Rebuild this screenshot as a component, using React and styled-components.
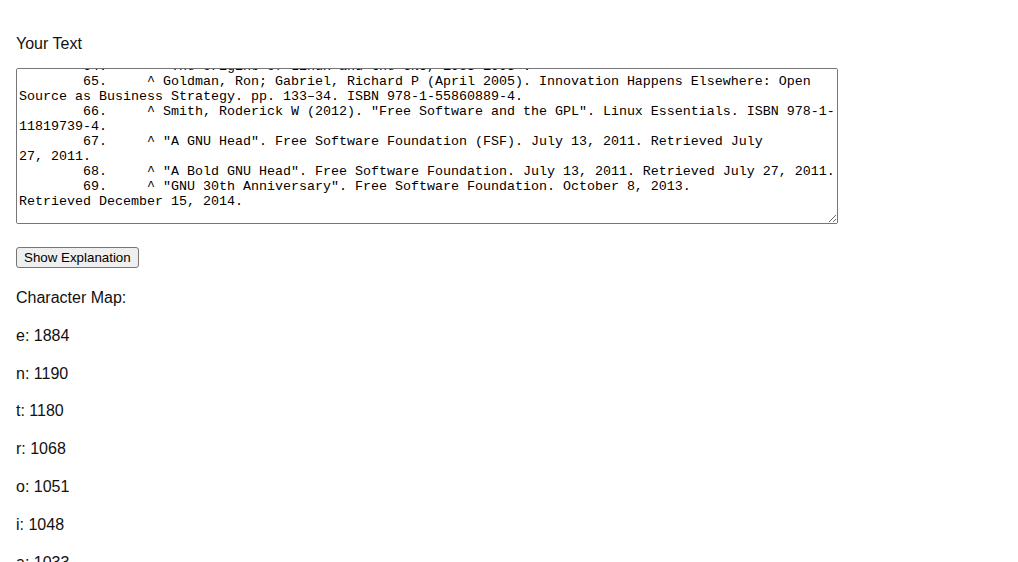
import React, { useLayoutEffect, useRef } from "react";
import styled, { createGlobalStyle } from "styled-components";

const GlobalStyle = createGlobalStyle`
  html, body {
    margin: 0;
    padding: 0;
    background: #ffffff;
    overflow: hidden;
  }
  body {
    font-family: "Liberation Sans", Arial, sans-serif;
    font-size: 16px;
    color: #000000;
  }
`;

const Page = styled.div`
  display: flex;
  flex-direction: column;
  align-items: flex-start;
  padding: 35px 16px 0 16px;
  & > * {
    flex-shrink: 0;
  }
`;

const FieldLabel = styled.label`
  display: block;
  font-size: 16px;
  line-height: 18px;
  margin-bottom: 15px;
  color: #111;
`;

const TextBox = styled.textarea`
  display: block;
  box-sizing: border-box;
  width: 822px;
  height: 156px;
  margin: 0;
  padding: 2px 1px 2px 2px;
  border: 1px solid #767676;
  border-radius: 2px;
  font-family: "Liberation Mono", "Courier New", monospace;
  font-size: 13.333px;
  line-height: 15px;
  color: #000;
  background: #fff;
  tab-size: 8;
  white-space: pre;
  overflow: auto;
  scrollbar-width: none;
  &::-webkit-scrollbar {
    display: none;
  }
`;

const ActionButton = styled.button`
  margin-top: 23px;
  box-sizing: border-box;
  height: 21px;
  padding: 0 7px;
  border: 1px solid #767676;
  border-radius: 3px;
  background: #efefef;
  font-family: "Liberation Sans", Arial, sans-serif;
  font-size: 13.333px;
  line-height: 15px;
  color: #000;
  cursor: default;
`;

const MapSection = styled.div`
  margin-top: 19px;
  display: flex;
  flex-direction: column;
  gap: 15.8px;
`;

const MapLine = styled.p`
  margin: 0;
  font-size: 16px;
  line-height: 22px;
  color: #111;
  white-space: nowrap;
`;

const TEXT = [
  "\t60.\t^ Stallman, Richard. \"The GNU Project\". GNU. Retrieved July 24, 2011.",
  "\t61.\t^ \"GNU Operating System\". Free Software Foundation.",
  "\t62.\t^ \"The GNU Manifesto\". Dr. Dobb's Journal. March 1985.",
  "\t63.\t^ \"Linux and GNU\". Free Software Foundation. Retrieved 2011.",
  "\t64.\t^ \"The origins of Linux and the GNU, 1983-1993\".",
  "\t65.\t^ Goldman, Ron; Gabriel, Richard P (April 2005). Innovation Happens Elsewhere: Open",
  "Source as Business Strategy. pp. 133–34. ISBN 978-1-55860889-4.",
  "\t66.\t^ Smith, Roderick W (2012). \"Free Software and the GPL\". Linux Essentials. ISBN 978-1-",
  "11819739-4.",
  "\t67.\t^ \"A GNU Head\". Free Software Foundation (FSF). July 13, 2011. Retrieved July",
  "27, 2011.",
  "\t68.\t^ \"A Bold GNU Head\". Free Software Foundation. July 13, 2011. Retrieved July 27, 2011.",
  "\t69.\t^ \"GNU 30th Anniversary\". Free Software Foundation. October 8, 2013.",
  "Retrieved December 15, 2014.",
  "",
  "",
].join("\n");

const charMap = [
  ["e", 1884],
  ["n", 1190],
  ["t", 1180],
  ["r", 1068],
  ["o", 1051],
  ["i", 1048],
  ["a", 1033],
];

export default function App() {
  const ref = useRef(null);
  useLayoutEffect(() => {
    if (ref.current) {
      ref.current.scrollTop = 5 * 15 - 3;
    }
  }, []);
  return (
    <>
      <GlobalStyle />
      <Page>
        <FieldLabel htmlFor="your-text">Your Text</FieldLabel>
        <TextBox
          id="your-text"
          ref={ref}
          wrap="off"
          spellCheck={false}
          defaultValue={TEXT}
        />
        <ActionButton type="button">Show Explanation</ActionButton>
        <MapSection>
          <MapLine>Character Map:</MapLine>
          {charMap.map(([ch, n]) => (
            <MapLine key={ch}>
              {ch}: {n}
            </MapLine>
          ))}
        </MapSection>
      </Page>
    </>
  );
}
